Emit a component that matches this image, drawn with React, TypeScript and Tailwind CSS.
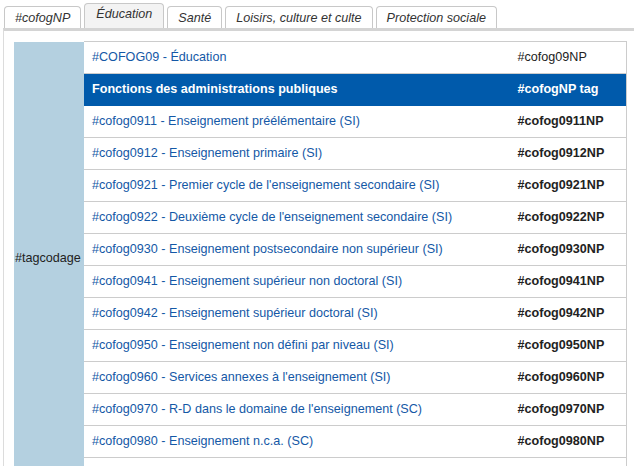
import React from 'react';

const tabs = ['#cofogNP', 'Éducation', 'Santé', 'Loisirs, culture et culte', 'Protection sociale'];

const rows: [string, string][] = [
  ['#cofog0911 - Enseignement préélémentaire (SI)', '#cofog0911NP'],
  ['#cofog0912 - Enseignement primaire (SI)', '#cofog0912NP'],
  ['#cofog0921 - Premier cycle de l\'enseignement secondaire (SI)', '#cofog0921NP'],
  ['#cofog0922 - Deuxième cycle de l\'enseignement secondaire (SI)', '#cofog0922NP'],
  ['#cofog0930 - Enseignement postsecondaire non supérieur (SI)', '#cofog0930NP'],
  ['#cofog0941 - Enseignement supérieur non doctoral (SI)', '#cofog0941NP'],
  ['#cofog0942 - Enseignement supérieur doctoral (SI)', '#cofog0942NP'],
  ['#cofog0950 - Enseignement non défini par niveau (SI)', '#cofog0950NP'],
  ['#cofog0960 - Services annexes à l\'enseignement (SI)', '#cofog0960NP'],
  ['#cofog0970 - R-D dans le domaine de l\'enseignement (SC)', '#cofog0970NP'],
  ['#cofog0980 - Enseignement n.c.a. (SC)', '#cofog0980NP'],
];

export default function App() {
  return (
    <div className="w-[634px] h-[466px] overflow-hidden bg-white font-['Liberation_Sans',Arial,sans-serif] text-[12.6px] text-[#333]">
      {/* tabs */}
      <div className="flex items-end gap-[3px] pl-[4px] pt-[3px] h-[28px]">
        {tabs.map((t, i) => (
          <div
            key={t}
            className={
              i === 1
                ? 'h-[25px] px-[11px] pt-[2px] border border-b-0 border-[#c8c8c8] rounded-t-[4px] bg-[#f3f3f3] italic leading-[16px] text-[#333]'
                : 'h-[22px] px-[10px] pt-[3px] border border-b-0 border-[#c8c8c8] rounded-t-[4px] bg-white italic leading-[16px] text-[#333]'
            }
          >
            {t}
          </div>
        ))}
      </div>
      {/* panel */}
      <div className="ml-[3px] border-t-[3px] border-l border-t-[#d4d4d4] border-l-[#dcdcdc] pl-[10px] pt-[10px] h-[460px]">
        <table className="w-[613px] border-collapse">
          <tbody>
            <tr className="h-[32px]">
              <td rowSpan={14} className="w-[70px] bg-[#b4d0e0] align-middle text-[#222] pl-[1px]">#tagcodage</td>
              <td className="border border-[#cccccc] border-l-0 border-r-0 pl-[8px] pb-[1px] text-[#1458a6]">#COFOG09 - Éducation</td>
              <td className="w-[117px] border border-[#cccccc] border-l-0 pl-[8px] pb-[1px] text-[#222]">#cofog09NP</td>
            </tr>
            <tr className="h-[32px] bg-[#005aab]">
              <td className="pl-[8px] font-bold text-white">Fonctions des administrations publiques</td>
              <td className="pl-[8px] font-bold text-white border-r border-[#cccccc]">#cofogNP tag</td>
            </tr>
            {rows.map(([a, b]) => (
              <tr key={b} className="h-[32px]">
                <td className="border-b border-[#cccccc] pl-[8px] text-[#1458a6]">{a}</td>
                <td className="border-b border-r border-[#cccccc] pl-[8px] font-bold text-[#222]">{b}</td>
              </tr>
            ))}
            <tr className="h-[18px]">
              <td className="border-b border-[#cccccc]"></td>
              <td className="border-b border-r border-[#cccccc]"></td>
            </tr>
          </tbody>
        </table>
      </div>
    </div>
  );
}
